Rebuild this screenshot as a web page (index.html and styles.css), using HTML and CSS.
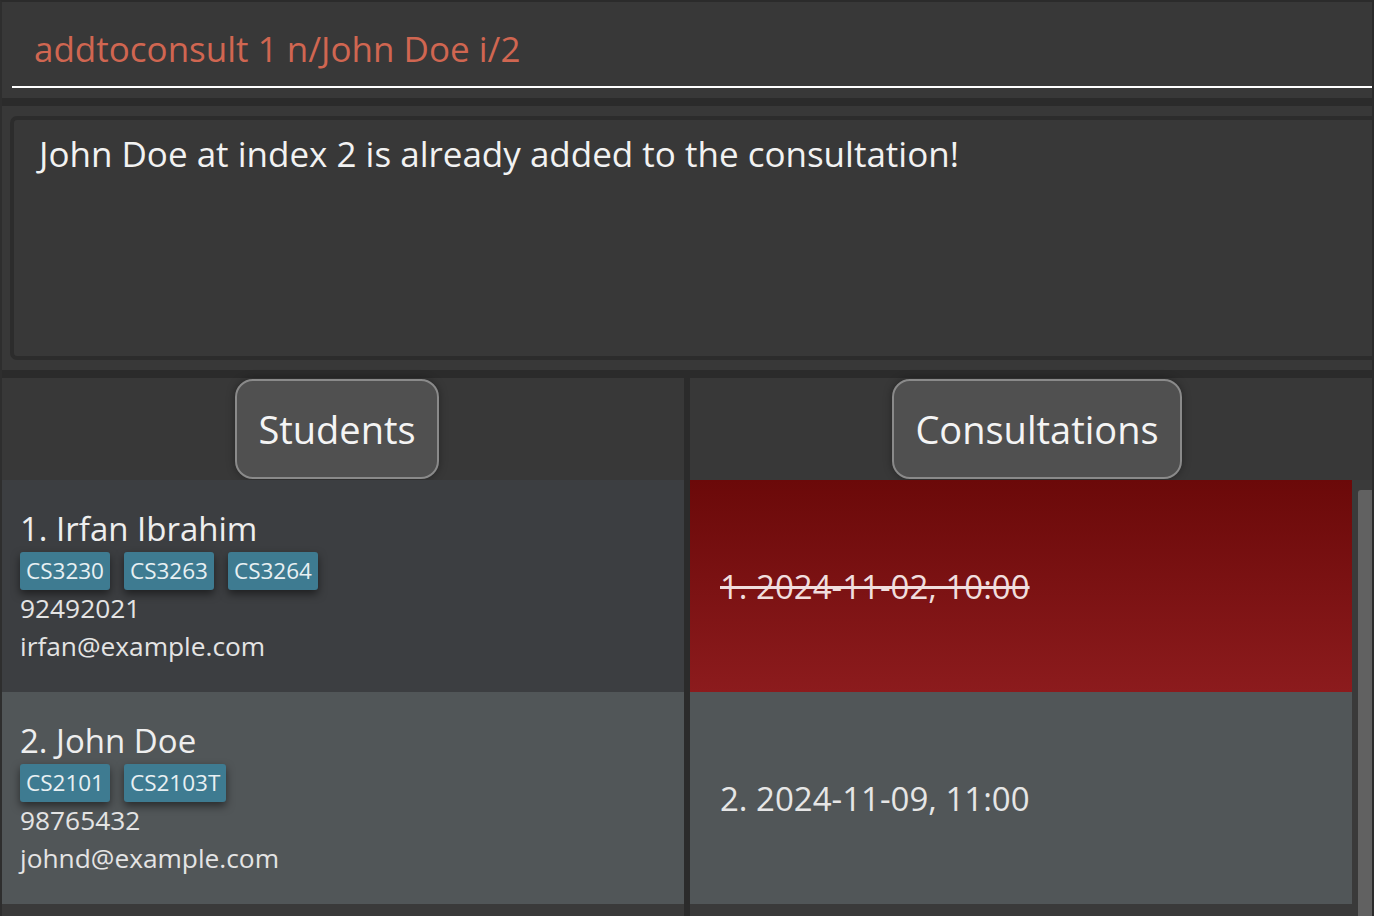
FILE: index.html
```html
<!DOCTYPE html>
<html lang="en">
<head>
<meta charset="utf-8">
<title>Consultations</title>
<link rel="stylesheet" href="styles.css">
</head>
<body>
<div class="app">
  <section class="command-pane">
    <div class="command-box">
      <div class="command-text">addtoconsult 1 n/John Doe i/2</div>
    </div>
  </section>
  <div class="divider-h"></div>
  <section class="result-pane">
    <div class="result-box">John Doe at index 2 is already added to the consultation!</div>
  </section>
  <div class="divider-h"></div>
  <section class="lists">
    <div class="list-col students-col">
      <div class="list-header students-header"><div class="tab-button">Students</div></div>
      <div class="list-body">
        <div class="student-card odd">
          <div class="name">1. Irfan Ibrahim</div>
          <div class="tags"><span class="tag">CS3230</span><span class="tag">CS3263</span><span class="tag">CS3264</span></div>
          <div class="detail">92492021</div>
          <div class="detail">irfan@example.com</div>
        </div>
        <div class="student-card even">
          <div class="name">2. John Doe</div>
          <div class="tags"><span class="tag">CS2101</span><span class="tag">CS2103T</span></div>
          <div class="detail">98765432</div>
          <div class="detail">johnd@example.com</div>
        </div>
      </div>
    </div>
    <div class="divider-v"></div>
    <div class="list-col consult-col">
      <div class="list-header consult-header"><div class="tab-button">Consultations</div></div>
      <div class="list-body consult-body">
        <div class="consult-items">
          <div class="consult-card past"><span class="consult-text">1. 2024-11-02, 10:00</span></div>
          <div class="consult-card even"><span class="consult-text">2. 2024-11-09, 11:00</span></div>
        </div>
        <div class="scrollbar"><div class="thumb"></div></div>
      </div>
    </div>
  </section>
</div>
</body>
</html>
```

FILE: styles.css
```css
* { box-sizing: border-box; }
html, body {
  margin: 0;
  padding: 0;
  width: 1374px;
  height: 916px;
  overflow: hidden;
  background: #383838;
  font-family: "Open Sans", "Noto Sans", sans-serif;
}
.app {
  width: 1374px;
  height: 916px;
  display: flex;
  flex-direction: column;
  border-top: 2px solid #2b2b2b;
  border-left: 2px solid #2e2e2e;
  border-right: 2px solid #2b2b2b;
  background: #383838;
}
.command-pane {
  height: 96px;
  padding: 0 0 0 10px;
}
.command-box {
  height: 86px;
  border-bottom: 2px solid #ffffff;
  padding-left: 22px;
  display: flex;
  align-items: center;
}
.command-text {
  color: #d06651;
  font-size: 35px;
  padding-top: 8px;
}
.divider-h {
  height: 8px;
  background: #2b2b2b;
  flex: none;
}
.result-pane {
  height: 264px;
  padding: 10px 0 10px 8px;
}
.result-box {
  height: 244px;
  border: 4px solid #2c2c2c;
  border-right: none;
  border-radius: 7px 0 0 7px;
  padding: 10px 0 0 25px;
  color: #f2f2f2;
  font-size: 35px;
  line-height: 48px;
}
.lists {
  flex: 1;
  display: flex;
  min-height: 0;
}
.list-col {
  display: flex;
  flex-direction: column;
}
.students-col { width: 682px; }
.consult-col { flex: 1; }
.divider-v {
  width: 6px;
  background: #2b2b2b;
}
.list-header {
  height: 102px;
  display: flex;
  justify-content: center;
  align-items: center;
  background: #383838;
}
.students-header { padding-right: 12px; }
.consult-header { padding-left: 12px; }
.tab-button {
  height: 100px;
  padding: 0 21px;
  display: flex;
  align-items: center;
  background: #505050;
  border: 2px solid #8a8a8a;
  border-radius: 18px;
  color: #f4f4f4;
  font-size: 38px;
  box-shadow: 0 0 8px rgba(0,0,0,0.35);
}
.list-body {
  flex: 1;
  background: #3a3a3a;
}
.student-card {
  height: 212px;
  padding: 25px 0 0 18px;
  color: #e6e6e6;
}
.student-card.odd { background: #3c3e41; }
.student-card.even { background: #515658; }
.name {
  font-size: 33px;
  line-height: 47px;
  color: #eeeeee;
}
.tags {
  display: flex;
  gap: 14px;
  height: 37px;
}
.tag {
  background: #3e7b91;
  color: #e8f0f3;
  font-size: 22.5px;
  line-height: 38px;
  height: 38px;
  padding: 0 6px;
  border-radius: 3px;
  box-shadow: 0 4px 8px rgba(0,0,0,0.5);
}
.detail {
  font-size: 26.3px;
  line-height: 38px;
  color: #e4e4e4;
}
.consult-body {
  display: flex;
}
.consult-items {
  flex: 1;
}
.consult-card {
  height: 212px;
  display: flex;
  align-items: center;
  padding-left: 30px;
  font-size: 33px;
  color: #e6e6e6;
}
.consult-card.past {
  background: linear-gradient(to bottom, #6b0909, #8c1b1d);
}
.consult-card.past .consult-text {
  text-decoration: line-through;
  color: #f0dede;
}
.consult-card.even { background: #515658; }
.scrollbar {
  width: 20px;
  padding: 10px 0 0 6px;
  background: #3a3a3a;
}
.thumb {
  height: 100%;
  background: #616161;
  border-radius: 3px 0 0 0;
}
```
